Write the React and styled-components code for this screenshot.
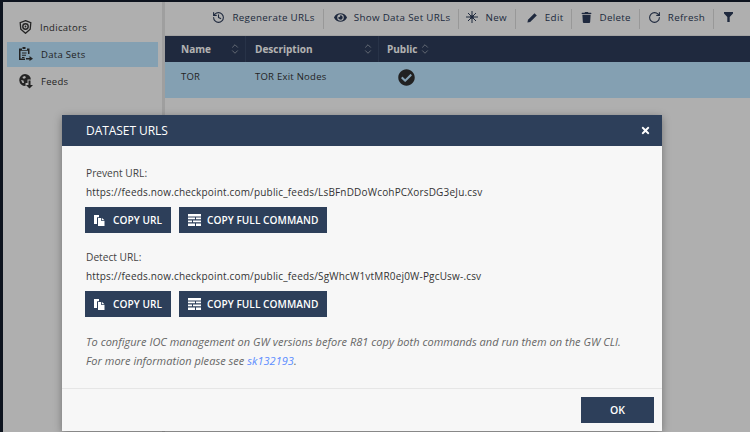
import styled, { createGlobalStyle } from "styled-components"
import { FaCheckCircle, FaTrash, FaEye, FaTimes } from "react-icons/fa"
import { History, RotateCw, ChevronUp, ChevronDown } from "lucide-react"

const GlobalStyle = createGlobalStyle`
  html, body { margin: 0; padding: 0; height: 100%; background: #141c2b; }
  #root { height: 100%; }
  * { box-sizing: border-box; }
`

const Page = styled.div`
  position: relative;
  width: 750px;
  height: 432px;
  overflow: hidden;
  padding: 2px 0 0 3px;
  display: flex;
  background: #141c2b;
  font-family: "Open Sans", sans-serif;
`

const Sidebar = styled.nav`
  width: 159px;
  flex: none;
  background: #fbfbfb;
  padding-top: 13px;
`

const SideItem = styled.div`
  height: 25px;
  margin: 0 4px 2px;
  width: 151px;
  padding: 0 0 1px 12px;
  display: flex;
  align-items: center;
  gap: 8px;
  font-size: 9.5px;
  letter-spacing: 0.3px;
  color: #333;
  background: ${({ $active }) => ($active ? "#bde5ff" : "transparent")};
`

const Divider = styled.div`
  width: 3px;
  flex: none;
  background: #e4e4e4;
`

const Main = styled.main`
  flex: 1;
  display: flex;
  flex-direction: column;
  background: #fbfbfb;
`

const Toolbar = styled.div`
  height: 34px;
  padding-right: 9px;
  display: flex;
  justify-content: flex-end;
  align-items: center;
  border-bottom: 1px solid #e8e8e8;
`

const ToolButton = styled.div`
  height: 20px;
  padding: 0 8px 3px ${({ $pad }) => $pad || 10}px;
  display: flex;
  align-items: center;
  gap: 7px;
  font-size: 9.8px;
  letter-spacing: 0.3px;
  color: #2d3c59;
  border-right: ${({ $last }) => ($last ? "0" : "1px solid #dadada")};
`

const TableHead = styled.div`
  height: 26px;
  display: flex;
  background: #2d3c59;
  color: #fff;
  font-size: 10px;
  font-weight: 700;
`

const HeadCell = styled.div`
  width: ${({ $w }) => $w}px;
  flex: ${({ $w }) => ($w ? "none" : "1")};
  padding-left: ${({ $pad }) => $pad}px;
  padding-right: 5px;
  display: flex;
  align-items: center;
  justify-content: ${({ $tight }) => ($tight ? "flex-start" : "space-between")};
  gap: 3px;
  border-right: ${({ $last }) => ($last ? "0" : "1px solid #3a4a68")};
`

const Sort = styled.span`
  display: inline-flex;
  flex-direction: column;
  color: #d4d8de;
  svg { display: block; margin: -2px 0; }
`

const TableRow = styled.div`
  height: 36px;
  display: flex;
  background: #bde5ff;
  color: #333;
  font-size: 9.5px;
  letter-spacing: 0.25px;
`

const Cell = styled.div`
  width: ${({ $w }) => $w}px;
  flex: none;
  padding: 8px 0 0 ${({ $pad }) => $pad}px;
`

const CheckCell = styled.div`
  flex: 1;
  padding: 7px 0 0 19px;
  color: #303030;
`

const Overlay = styled.div`
  position: absolute;
  inset: 0;
  background: rgba(0, 0, 0, 0.3);
`

const Dialog = styled.section`
  position: absolute;
  left: 62px;
  top: 115px;
  width: 600px;
  height: 316px;
  background: #f7f7f7;
  box-shadow: 0 2px 8px rgba(0, 0, 0, 0.35);
  display: flex;
  flex-direction: column;
`

const DialogHeader = styled.header`
  height: 31px;
  flex: none;
  background: #2d3f5a;
  color: #fff;
  padding: 0 11px 0 24px;
  display: flex;
  align-items: center;
  justify-content: space-between;
  font-size: 12px;
  letter-spacing: -0.05px;
`

const DialogBody = styled.div`
  flex: 1;
  padding: 20px 23px 0;
`

const UrlBlock = styled.div`
  margin-bottom: 17px;
  &:last-of-type { margin-bottom: 15px; }
`

const UrlLabel = styled.div`
  font-size: 10.2px;
  line-height: 14px;
  padding-left: 1px;
  color: #444;
  margin-bottom: 5px;
`

const UrlText = styled.div`
  font-size: 10px;
  line-height: 14px;
  padding-left: 1px;
  letter-spacing: 0.18px;
  color: #333;
  margin-bottom: 8px;
`

const ButtonRow = styled.div`
  display: flex;
  gap: 8px;
`

const ActionButton = styled.button`
  height: 26px;
  border: 0;
  padding: 0 9px;
  display: flex;
  align-items: center;
  gap: ${({ $gap }) => $gap || 8}px;
  background: #2d3f5a;
  color: #fff;
  font-family: inherit;
  font-size: 10.1px;
  font-weight: 600;
  letter-spacing: 0.05px;
`

const Note = styled.p`
  margin: 0;
  padding-left: 1px;
  font-size: 11px;
  line-height: 19px;
  letter-spacing: 0.03px;
  font-style: italic;
  color: #666;
`

const NoteLink = styled.a`
  color: #5b8cff;
`

const DialogFooter = styled.footer`
  height: 43px;
  flex: none;
  border-top: 1px solid #e6e6e6;
  padding: 8px 8px 0 0;
  display: flex;
  justify-content: flex-end;
  align-items: flex-start;
`

const OkButton = styled(ActionButton)`
  width: 73px;
  justify-content: center;
  font-size: 10.5px;
`

const CopyIcon = () => (
  <svg width="11" height="12" viewBox="0 0 11 12" fill="#fff">
    <path d="M0 1h5v2.2H3V10H0z" />
    <path d="M4 4h3.2v3H10.5v5H4z" />
    <path d="M8 4l2.5 2.3H8z" />
  </svg>
)

const CommandIcon = () => (
  <svg width="13" height="12" viewBox="0 0 13 12" fill="#fff">
    <path d="M0 0h13v2.5H0z" />
    <path d="M0 3.5h7v1.8H0zM8 3.5h5v1.8H8z" />
    <path d="M0 6.5h4v1.8H0zM5 6.5h8v1.8H5z" />
    <path d="M0 9.5h7V12H0zM8 9.5h5V12H8z" />
  </svg>
)

const ShieldIcon = () => (
  <svg width="13" height="14" viewBox="0 0 13 14" fill="none" stroke="#333">
    <path d="M6.5 .7l5.3 2-.6 6.6-4.7 4-4.7-4-.6-6.6z" strokeWidth="1.3" />
    <circle cx="6.5" cy="6.5" r="2.7" strokeWidth="1.4" />
    <circle cx="6.5" cy="6.5" r=".9" fill="#333" stroke="none" />
  </svg>
)

const DatasetIcon = () => (
  <svg width="14" height="14" viewBox="0 0 14 14" fill="#333">
    <path d="M0 1.5h3V3h5V1.5h2.5V7H9V3.8H1.5v7.7H6V13H0z" />
    <path d="M3.5 0h3v2h-3z" />
    <path d="M3 5.5h4.5v1H3zM3 7.8h4v1H3zM3 10h2.5v1H3z" />
    <path d="M7 11h3.5V9l3.5 2.7-3.5 2.3v-1.6H7z" />
  </svg>
)

const FeedsIcon = () => (
  <svg width="14" height="15" viewBox="0 0 14 15" fill="#333">
    <path d="M6 0a6 6 0 0 1 5.9 5.5H8.5V9H6.5v3A6 6 0 0 1 6 0z" />
    <path d="M3.5 3l2-1 1.5 1-1 1.5H4zM2 6l2.5.5L5 9 3.5 9z" fill="#fbfbfb" />
    <path d="M9.5 6.5h2V11H14l-3.5 3.5L7 11h2.5z" />
  </svg>
)

const SparkIcon = () => (
  <svg width="12" height="12" viewBox="0 0 12 12" stroke="#2d3c59" strokeWidth="1">
    <path d="M6 0v12M0 6h12M2 2l8 8M10 2l-8 8" />
    <circle cx="6" cy="6" r="1.8" fill="#2d3c59" stroke="none" />
  </svg>
)

const PencilIcon = () => (
  <svg width="11" height="11" viewBox="0 0 11 11" fill="#2d3c59">
    <path d="M7.5 1.2l2.3 2.3L3.2 10 0.4 10.6 1 7.8z" />
  </svg>
)

const FilterIcon = () => (
  <svg width="9" height="10" viewBox="0 0 9 10" fill="#2d3c59">
    <path d="M0 0h9v1.6L5.7 5v5H3.3V5L0 1.6z" />
  </svg>
)

const SortIcon = () => (
  <Sort>
    <ChevronUp size={10} strokeWidth={1.4} />
    <ChevronDown size={10} strokeWidth={1.4} />
  </Sort>
)

const UrlSection = ({ label, url }) => (
  <UrlBlock>
    <UrlLabel>{label}</UrlLabel>
    <UrlText>{url}</UrlText>
    <ButtonRow>
      <ActionButton>
        <CopyIcon />
        COPY URL
      </ActionButton>
      <ActionButton $gap={6}>
        <CommandIcon />
        COPY FULL COMMAND
      </ActionButton>
    </ButtonRow>
  </UrlBlock>
)

export default function App() {
  return (
    <Page>
      <GlobalStyle />
      <Sidebar>
        <SideItem>
          <ShieldIcon />
          Indicators
        </SideItem>
        <SideItem $active>
          <DatasetIcon />
          Data Sets
        </SideItem>
        <SideItem>
          <FeedsIcon />
          Feeds
        </SideItem>
      </Sidebar>
      <Divider />
      <Main>
        <Toolbar>
          <ToolButton>
            <History size={13} strokeWidth={2} />
            Regenerate URLs
          </ToolButton>
          <ToolButton>
            <FaEye size={13} />
            Show Data Set URLs
          </ToolButton>
          <ToolButton $pad={7}>
            <SparkIcon />
            New
          </ToolButton>
          <ToolButton $pad={11}>
            <PencilIcon />
            Edit
          </ToolButton>
          <ToolButton $pad={9}>
            <FaTrash size={11} />
            Delete
          </ToolButton>
          <ToolButton $pad={8}>
            <RotateCw size={13} strokeWidth={2} />
            Refresh
          </ToolButton>
          <ToolButton $last $pad={10}>
            <FilterIcon />
          </ToolButton>
        </Toolbar>
        <TableHead>
          <HeadCell $w={81} $pad={16}>
            Name
            <SortIcon />
          </HeadCell>
          <HeadCell $w={133} $pad={9}>
            Description
            <SortIcon />
          </HeadCell>
          <HeadCell $last $tight $pad={8}>
            Public
            <SortIcon />
          </HeadCell>
        </TableHead>
        <TableRow>
          <Cell $w={81} $pad={16}>TOR</Cell>
          <Cell $w={133} $pad={9}>TOR Exit Nodes</Cell>
          <CheckCell>
            <FaCheckCircle size={17} />
          </CheckCell>
        </TableRow>
      </Main>
      <Overlay />
      <Dialog>
        <DialogHeader>
          DATASET URLS
          <FaTimes size={11} />
        </DialogHeader>
        <DialogBody>
          <UrlSection
            label="Prevent URL:"
            url="https://feeds.now.checkpoint.com/public_feeds/LsBFnDDoWcohPCXorsDG3eJu.csv"
          />
          <UrlSection
            label="Detect URL:"
            url="https://feeds.now.checkpoint.com/public_feeds/SgWhcW1vtMR0ej0W-PgcUsw-.csv"
          />
          <Note>
            To configure IOC management on GW versions before R81 copy both commands and run them on the GW CLI.
            <br />
            For more information please see <NoteLink>sk132193</NoteLink>.
          </Note>
        </DialogBody>
        <DialogFooter>
          <OkButton>OK</OkButton>
        </DialogFooter>
      </Dialog>
    </Page>
  )
}
